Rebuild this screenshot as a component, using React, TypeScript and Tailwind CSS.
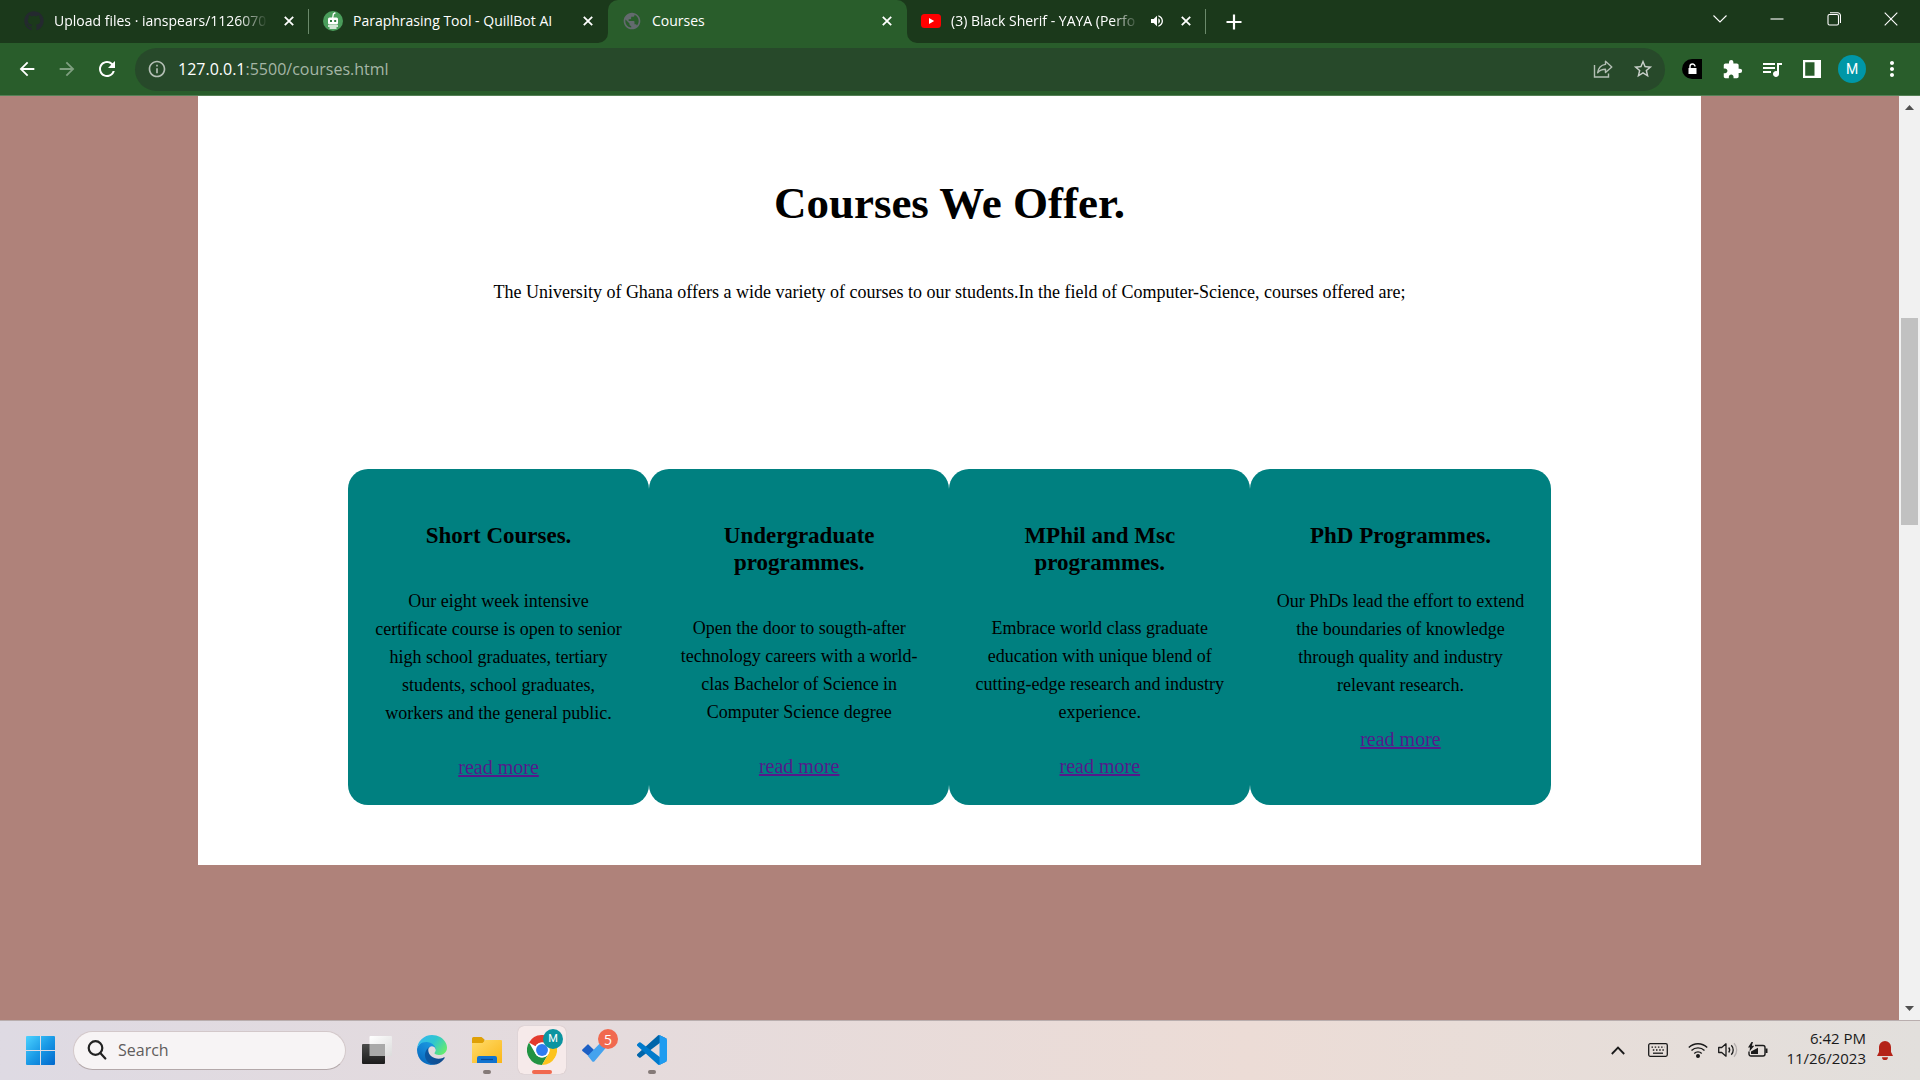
import type { ReactNode } from "react";
import {
  MdArrowBack,
  MdArrowForward,
  MdExtension,
  MdInfoOutline,
  MdMoreVert,
  MdPublic,
  MdQueueMusic,
  MdRefresh,
  MdStarBorder,
  MdVolumeUp,
} from "react-icons/md";
import { FaGithub } from "react-icons/fa";

/* ---------- Tab strip ---------- */

function QuillBotIcon() {
  return (
    <svg viewBox="0 0 20 20" className="size-5 shrink-0">
      <circle cx="10" cy="10" r="10" fill="#4a9d5b" />
      <path d="M9.6 7.5 10.4 3l2-1.4" stroke="#fff" strokeWidth="1.3" fill="none" />
      <rect x="5" y="6.5" width="10" height="7" rx="1.5" fill="#fff" />
      <rect x="7" y="9" width="2" height="2" fill="#2d7a40" />
      <rect x="11.2" y="9" width="2" height="2" fill="#2d7a40" />
      <path d="M5 15h10M6.500 17h7" stroke="#fff" strokeWidth="1.4" />
    </svg>
  );
}

function YouTubeIcon() {
  return (
    <svg viewBox="0 0 20 20" className="size-5 shrink-0">
      <rect y="3" width="20" height="14" rx="3.500" fill="#f00" />
      <path d="M8 7v6l5.200-3z" fill="#fff" />
    </svg>
  );
}

function CloseGlyph() {
  return (
    <svg viewBox="0 0 10 10" className="size-[10px]" stroke="currentColor" strokeWidth="1.800">
      <path d="M.8.8l8.400 8.400M9.200.8.8 9.200" />
    </svg>
  );
}

type TabProps = {
  icon: ReactNode;
  title: string;
  active?: boolean;
  faded?: boolean;
  divider?: boolean;
  audible?: boolean;
};

function Tab({ icon, title, active, faded, divider, audible }: TabProps) {
  return (
    <div
      className={
        active
          ? "relative flex h-full w-[299px] min-w-0 items-center gap-[10px] rounded-t-[10px] bg-[#295d2b] pr-[9px] pb-0.5 pl-[14px]"
          : "relative flex h-full w-[299px] min-w-0 items-center gap-[10px] pr-[9px] pb-0.5 pl-[14px]"
      }
    >
      {active && (
        <>
          <svg viewBox="0 0 10 10" className="absolute bottom-0 -left-[10px] size-[10px]" fill="#295d2b">
            <path d="M10 0v10H0A10 10 0 0 0 10 0z" />
          </svg>
          <svg viewBox="0 0 10 10" className="absolute -right-[10px] bottom-0 size-[10px]" fill="#295d2b">
            <path d="M0 0v10h10A10 10 0 0 1 0 0z" />
          </svg>
        </>
      )}
      {icon}
      <span
        className={
          faded
            ? "min-w-0 flex-1 overflow-hidden whitespace-nowrap [mask-image:linear-gradient(to_right,black_86%,transparent)]"
            : "min-w-0 flex-1 overflow-hidden whitespace-nowrap"
        }
      >
        {title}
      </span>
      {audible && <MdVolumeUp className="size-4 shrink-0" />}
      <button type="button" aria-label={`Close ${title}`} className="flex w-[22px] shrink-0 justify-center">
        <CloseGlyph />
      </button>
      {divider && <span className="absolute top-[9px] right-0 h-[25px] w-px bg-[#6b8a6b]" />}
    </div>
  );
}

function WindowButton({ label, children }: { label: string; children: ReactNode }) {
  return (
    <button type="button" aria-label={label} className="flex h-[37px] w-[57px] items-center justify-center">
      <svg viewBox="0 0 14 14" className="size-[14px]" fill="none" stroke="#fff" strokeWidth="1.100">
        {children}
      </svg>
    </button>
  );
}

function TabStrip() {
  return (
    <div className="flex h-[43px] bg-[#1b391b] text-white">
      <div className="flex h-full min-w-0 flex-1 pl-[10px] text-sm">
        <Tab icon={<FaGithub className="size-5 shrink-0 text-[#24292f]" />} title="Upload files · ianspears/1126070" faded divider />
        <Tab icon={<QuillBotIcon />} title="Paraphrasing Tool - QuillBot AI" />
        <Tab icon={<MdPublic className="size-5 shrink-0 text-[#636a6e]" />} title="Courses" active />
        <Tab icon={<YouTubeIcon />} title="(3) Black Sherif - YAYA (Perfo" faded divider audible />
        <button type="button" aria-label="New tab" className="ml-[10px] flex w-9 items-center justify-center">
          <svg viewBox="0 0 16 16" className="size-4" stroke="#fff" strokeWidth="2.200">
            <path d="M8 .5v15M.5 8h15" />
          </svg>
        </button>
      </div>
      <div className="flex pr-px">
        <WindowButton label="Search tabs">
          <path d="M.5 3.500 7 10l6.500-6.500" />
        </WindowButton>
        <WindowButton label="Minimize">
          <path d="M.5 7h13" />
        </WindowButton>
        <WindowButton label="Restore">
          <rect x="1" y="2.500" width="10.500" height="10.500" rx="1.500" />
          <path d="M3 .8h7.500a3 3 0 0 1 3 3V11" />
        </WindowButton>
        <WindowButton label="Close window">
          <path d="m.7.7 12.600 12.600M13.300.7.7 13.300" />
        </WindowButton>
      </div>
    </div>
  );
}

/* ---------- Toolbar ---------- */

function ToolButton({ label, children }: { label: string; children: ReactNode }) {
  return (
    <button type="button" aria-label={label} className="flex h-10 w-10 shrink-0 items-center justify-center">
      {children}
    </button>
  );
}

function Toolbar() {
  return (
    <div className="flex h-[53px] items-center border-b border-[#548055] bg-[#295d2b] pr-2 pl-[7px] text-white">
      <ToolButton label="Back">
        <MdArrowBack className="size-[22px]" />
      </ToolButton>
      <ToolButton label="Forward">
        <MdArrowForward className="size-[22px] text-[#7f9f80]" />
      </ToolButton>
      <ToolButton label="Reload">
        <MdRefresh className="size-6" />
      </ToolButton>
      <div className="ml-2 flex h-[43px] min-w-0 flex-1 items-center rounded-full bg-[#27492a] pr-[2px] pl-3">
        <MdInfoOutline className="size-5 shrink-0 text-[#b4bfb5]" />
        <div
          role="textbox"
          aria-label="Address and search bar"
          className="ml-[11px] min-w-0 flex-1 text-base text-[#a5b6a6]"
        >
          <span className="text-white">127.0.0.1</span>:5500/courses.html
        </div>
        <ToolButton label="Share this page">
          <svg viewBox="0 0 20 20" className="size-5" fill="none" stroke="#b4bfb5" strokeWidth="1.400">
            <path d="M1.500 6v12h14v-3.500" />
            <path d="M12.500 2.200 18.800 8l-6.300 5.600v-3.300c-3.700 0-5.900 1-7.900 3.500.6-4.400 3-7.700 7.900-8.400z" strokeLinejoin="round" />
          </svg>
        </ToolButton>
        <ToolButton label="Bookmark this page">
          <MdStarBorder className="size-[22px] text-[#c9d0ca]" />
        </ToolButton>
      </div>
      <div className="ml-[7px] flex">
        <ToolButton label="Lock extension">
          <svg viewBox="0 0 20 20" className="size-5">
            <path d="M10 0h10v20H10A10 10 0 0 1 10 0z" fill="#000" />
            <rect x="6.500" y="9" width="8" height="6" fill="#fff" />
            <path d="M8 9V7.500a2.500 2.500 0 0 1 5 0" fill="none" stroke="#fff" strokeWidth="1.400" />
          </svg>
        </ToolButton>
        <ToolButton label="Extensions">
          <MdExtension className="size-[21px]" />
        </ToolButton>
        <ToolButton label="Media controls">
          <MdQueueMusic className="size-6" />
        </ToolButton>
        <ToolButton label="Side panel">
          <svg viewBox="0 0 18 18" className="size-[18px]">
            <path d="M0 0h18v18H0zM2.200 2.200v13.600h9.300V2.200z" fill="#fff" fillRule="evenodd" />
          </svg>
        </ToolButton>
        <ToolButton label="Profile">
          <span className="flex size-7 items-center justify-center rounded-full bg-[#0097a7] font-[Roboto] text-sm">M</span>
        </ToolButton>
        <ToolButton label="Menu">
          <MdMoreVert className="size-6" />
        </ToolButton>
      </div>
    </div>
  );
}

/* ---------- Page ---------- */

const courses = [
  {
    title: "Short Courses.",
    text: "Our eight week intensive certificate course is open to senior high school graduates, tertiary students, school graduates, workers and the general public.",
  },
  {
    title: "Undergraduate programmes.",
    text: "Open the door to sougth-after technology careers with a world-clas Bachelor of Science in Computer Science degree",
  },
  {
    title: "MPhil and Msc programmes.",
    text: "Embrace world class graduate education with unique blend of cutting-edge research and industry experience.",
  },
  {
    title: "PhD Programmes.",
    text: "Our PhDs lead the effort to extend the boundaries of knowledge through quality and industry relevant research.",
  },
];

function CoursesPage() {
  return (
    <main className="min-w-0 flex-1 bg-[#af827a] px-[10px] font-['Liberation_Serif',serif] text-black">
      <section className="mx-auto w-4/5 bg-white pt-20 pb-[60px] text-center">
        <h1 className="text-[45px] leading-[54px] font-bold">Courses We Offer.</h1>
        <p className="mt-12 text-[18px] leading-7">
          The University of Ghana offers a wide variety of courses to our students.In the field of Computer-Science,
          courses offered are;
        </p>
        <div className="mx-auto mt-[163px] grid w-4/5 grid-cols-4">
          {courses.map((course) => (
            <article key={course.title} className="rounded-[20px] bg-[teal] px-6 pt-[53px] pb-6">
              <h3 className="text-[23px] leading-[27px] font-bold">{course.title}</h3>
              <p className="mt-[38px] text-[18px] leading-7">{course.text}</p>
              <a href="#more" className="mt-[26px] inline-block text-xl text-[#551a8b] underline">
                read more
              </a>
            </article>
          ))}
        </div>
      </section>
    </main>
  );
}

function Scrollbar() {
  return (
    <div className="flex w-[21px] shrink-0 flex-col items-center bg-[#f1f1f1]">
      <svg viewBox="0 0 21 22" className="h-[22px] w-[21px]" fill="#505050">
        <path d="m6 14 4.500-5 4.500 5z" />
      </svg>
      <div className="flex w-full flex-1 flex-col items-center pt-[200px]">
        <div className="h-[207px] w-[17px] bg-[#c1c1c1]" />
      </div>
      <svg viewBox="0 0 21 22" className="h-[22px] w-[21px]" fill="#505050">
        <path d="m6 8 4.500 5L15 8z" />
      </svg>
    </div>
  );
}

/* ---------- Taskbar ---------- */

function WindowsLogo() {
  return (
    <svg viewBox="0 0 29 29" className="size-[29px]">
      <defs>
        <linearGradient id="win" x1="0" y1="0" x2="1" y2="1">
          <stop offset="0" stopColor="#4cd2ff" />
          <stop offset=".5" stopColor="#1a9ae6" />
          <stop offset="1" stopColor="#0067cc" />
        </linearGradient>
      </defs>
      <path
        d="M1 0h13v14H0V1a1 1 0 0 1 1-1zM15 0h13a1 1 0 0 1 1 1v13H15zM0 15h14v14H1a1 1 0 0 1-1-1zM15 15h14v13a1 1 0 0 1-1 1H15z"
        fill="url(#win)"
      />
    </svg>
  );
}

function TaskViewIcon() {
  return (
    <svg viewBox="0 0 30 30" className="size-[30px]">
      <defs>
        <linearGradient id="tvDark" x1="0" y1="0" x2="0" y2="1">
          <stop offset="0" stopColor="#4a4a4a" />
          <stop offset="1" stopColor="#1c1c1c" />
        </linearGradient>
        <linearGradient id="tvLight" x1="0" y1="0" x2="1" y2="1">
          <stop offset="0" stopColor="#fff" />
          <stop offset="1" stopColor="#dcdcdc" />
        </linearGradient>
      </defs>
      <rect x="7.500" y="1" width="22.500" height="20" rx="1" fill="url(#tvLight)" />
      <rect y="9" width="23" height="20" rx="1" fill="url(#tvDark)" />
      <rect x="7.500" y="9" width="15.500" height="12" fill="#a9a9a9" />
    </svg>
  );
}

function EdgeIcon() {
  return (
    <svg viewBox="0 0 256 256" className="size-[30px]">
      <defs>
        <linearGradient id="edgeA" x1="0" y1="0" x2="1" y2="0">
          <stop offset="0" stopColor="#0c59a4" />
          <stop offset="1" stopColor="#114a8b" />
        </linearGradient>
        <linearGradient id="edgeB" x1=".8" y1="0" x2=".2" y2="1">
          <stop offset="0" stopColor="#1b9de2" />
          <stop offset=".5" stopColor="#1383d3" />
          <stop offset="1" stopColor="#0563b8" />
        </linearGradient>
        <linearGradient id="edgeC" x1="0" y1=".2" x2="1" y2=".7">
          <stop offset="0" stopColor="#35b7f1" />
          <stop offset=".5" stopColor="#2fc6cf" />
          <stop offset="1" stopColor="#66eb6e" />
        </linearGradient>
      </defs>
      <path
        fill="url(#edgeA)"
        d="M231 190.500c-3.400 1.800-6.900 3.400-10.500 4.700a101.900 101.900 0 0 1-35.900 6.400c-47.300 0-88.500-32.500-88.500-74.300 0-11.400 6.500-21.900 16.400-27.300-42.800 1.800-53.800 46.400-53.800 72.500 0 73.900 68.100 81.400 82.800 81.400 7.900 0 19.800-2.300 27-4.600l1.300-.4a128.300 128.300 0 0 0 66.600-52.800 4 4 0 0 0-5.400-5.600z"
      />
      <path
        fill="url(#edgeB)"
        d="M105.700 241.400a79.200 79.200 0 0 1-22.700-21.300 80.700 80.700 0 0 1 29.500-120c3.200-1.500 8.500-4.100 15.600-4a32.400 32.400 0 0 1 25.700 13 31.900 31.900 0 0 1 6.300 18.700c0-.2 24.500-79.600-80-79.600-43.900 0-80 41.700-80 78.200a130.200 130.200 0 0 0 12.100 56 128 128 0 0 0 156.400 67 75.500 75.500 0 0 1-62.900-8z"
      />
      <path
        fill="url(#edgeC)"
        d="M152.300 148.900c-.9 1-3.400 2.500-3.400 5.600 0 2.600 1.700 5.200 4.800 7.300 14.300 10 41.400 8.600 41.500 8.600 10.700 0 21.100-2.900 30.300-8.300A61.400 61.400 0 0 0 256 109.200c.3-22.400-8-37.300-11.300-43.900C223.500 23.900 177.700 0 128 0A128 128 0 0 0 0 126.200c.5-36.500 36.800-66 80-66 3.500 0 23.500.3 42 10 16.300 8.600 24.900 18.900 30.800 29.200 6.200 10.700 7.300 24.100 7.300 29.500s-2.700 13.300-7.800 20z"
      />
    </svg>
  );
}

function FolderIcon() {
  return (
    <svg viewBox="0 0 30 30" className="size-[30px]">
      <defs>
        <linearGradient id="folder" x1="0" y1="0" x2="1" y2="1">
          <stop offset="0" stopColor="#ffdc6b" />
          <stop offset="1" stopColor="#fbb617" />
        </linearGradient>
      </defs>
      <path d="M0 3.500A1.500 1.500 0 0 1 1.500 2h8l3 2.500V9H0z" fill="#dfa006" />
      <path d="M0 8h10.500l3-3H29a1 1 0 0 1 1 1v22H0z" fill="url(#folder)" />
      <path d="M5 28v-5a2 2 0 0 1 2-2h16a2 2 0 0 1 2 2v5z" fill="#1173cf" />
      <path d="M9 24.500h12" stroke="#0a4a94" strokeWidth="1.200" />
    </svg>
  );
}

function ChromeIcon() {
  return (
    <svg viewBox="0 0 48 48" className="size-[30px]">
      <circle cx="24" cy="24" r="24" fill="#fff" />
      <path d="M3.200 12A24 24 0 0 1 44.800 12H24a12 12 0 0 0-10.400 6z" fill="#e33b2e" />
      <path d="M3.200 12A24 24 0 0 0 24 48l10.400-18a12 12 0 0 1-20.800 0z" fill="#229342" />
      <path d="M44.800 12A24 24 0 0 1 24 48l10.400-18A12 12 0 0 0 34.400 18 12 12 0 0 0 24 12z" fill="#fcc31e" />
      <circle cx="24" cy="24" r="12" fill="#fff" />
      <circle cx="24" cy="24" r="9.500" fill="#2f7cf0" />
    </svg>
  );
}

function TodoIcon() {
  return (
    <svg viewBox="0 0 30 30" className="size-[30px]">
      <path d="M.4 14.600 5.300 9.700a1 1 0 0 1 1.400 0L15 18l-4 6.500L.4 16a1 1 0 0 1 0-1.400z" fill="#1c5fc4" />
      <path d="m5.800 20.800 15.700-16a1.500 1.500 0 0 1 2.100 0l2.800 2.900a1.500 1.500 0 0 1 0 2L12.300 26.400a1.500 1.500 0 0 1-2 0z" fill="#45a3ee" />
    </svg>
  );
}

function VsCodeIcon() {
  return (
    <svg viewBox="0 0 100 100" className="size-[30px]">
      <path
        d="M96.500 10.800 75.900.9a6.200 6.200 0 0 0-7.100 1.200L1.300 63.600a4.200 4.200 0 0 0 0 6.200l5.500 5a4.200 4.200 0 0 0 5.300.2L93.400 13.400a4.100 4.100 0 0 1 6.600 3.300v-.3a6.200 6.200 0 0 0-3.500-5.600z"
        fill="#0065a9"
      />
      <path
        d="m96.500 89.200-20.600 9.900a6.200 6.200 0 0 1-7.100-1.200L1.300 36.400a4.200 4.200 0 0 1 0-6.200l5.500-5a4.200 4.200 0 0 1 5.300-.2l81.300 61.600a4.100 4.100 0 0 0 6.600-3.300v.3a6.200 6.200 0 0 1-3.500 5.600z"
        fill="#007acc"
      />
      <path
        d="M75.900 99.100a6.200 6.200 0 0 1-7.100-1.200c2.300 2.300 6.200.7 6.200-2.600V4.700c0-3.300-3.900-4.900-6.200-2.600A6.200 6.200 0 0 1 75.900.9l20.600 9.900a6.200 6.200 0 0 1 3.500 5.600v67.200a6.200 6.200 0 0 1-3.500 5.600z"
        fill="#1f9cf0"
      />
    </svg>
  );
}

type AppButtonProps = { label: string; children: ReactNode; running?: boolean; active?: boolean; badge?: ReactNode };

function AppButton({ label, children, running, active, badge }: AppButtonProps) {
  return (
    <button
      type="button"
      aria-label={label}
      className={
        active
          ? "relative flex size-12 shrink-0 items-center justify-center rounded-md bg-[#f6eaea] shadow-[0_0_1px_#b9a5a5]"
          : "relative flex size-12 shrink-0 items-center justify-center rounded-md"
      }
    >
      {children}
      {badge}
      {running && <span className="absolute bottom-0 left-5 h-1 w-2 rounded-full bg-[#857a78]" />}
      {active && <span className="absolute bottom-0 left-[14px] h-1 w-5 rounded-full bg-[#f1694f]" />}
    </button>
  );
}

function Tray() {
  return (
    <div className="flex items-center text-[#1a1a1a]">
      <button type="button" aria-label="Show hidden icons" className="mr-[23px]">
        <svg viewBox="0 0 14 9" className="h-[9px] w-[14px]" fill="none" stroke="currentColor" strokeWidth="1.800">
          <path d="M.8 8 7 1.600 13.200 8" />
        </svg>
      </button>
      <button type="button" aria-label="Touch keyboard" className="mr-5">
        <svg viewBox="0 0 20 14" className="h-[14px] w-5" fill="none" stroke="currentColor" strokeWidth="1.300">
          <rect x=".7" y=".7" width="18.600" height="12.600" rx="1.500" />
          <path d="M3.500 4.200h13M4.800 7h11" strokeDasharray="1.500 1.700" />
          <path d="M5 10.200h10" />
        </svg>
      </button>
      <button type="button" aria-label="Network, volume and battery" className="flex items-center gap-[10px]">
        <svg viewBox="0 0 20 16" className="h-4 w-5" fill="none" stroke="currentColor" strokeWidth="1.400">
          <path d="M.8 5.600a13 13 0 0 1 18.400 0M3.500 8.600a9.200 9.200 0 0 1 13 0M6.300 11.400a5.300 5.300 0 0 1 7.400 0" />
          <circle cx="10" cy="14" r="1.300" fill="currentColor" />
        </svg>
        <svg viewBox="0 0 20 16" className="h-4 w-5" fill="none" stroke="currentColor" strokeWidth="1.300">
          <path d="M.7 5.500h3L8 1.800v12.400l-4.300-3.700h-3z" strokeLinejoin="round" />
          <path d="M10.700 5.500a4 4 0 0 1 0 5M13.300 3.200a7 7 0 0 1 0 9.600" />
          <path d="M16 1.200a10 10 0 0 1 0 13.600" stroke="#b5afae" />
        </svg>
        <svg viewBox="0 0 20 16" className="h-4 w-5" fill="none" stroke="currentColor" strokeWidth="1.400">
          <path d="M7 3.500h8a2 2 0 0 1 2 2V12a2 2 0 0 1-2 2H3a2 2 0 0 1-2-2V9.500" />
          <path d="M3 12V9.500L10 5.800V12z" fill="currentColor" stroke="none" />
          <path d="M17.500 6.500h2v4.500h-2z" fill="currentColor" stroke="none" />
          <path d="M3.500 0 0 5.500h2L1.500 9.500 6.300 3.800H3.800L5 0z" fill="currentColor" stroke="none" />
        </svg>
      </button>
      <button type="button" className="ml-[18px] pb-1 text-right text-[15px] leading-5">
        <span className="block">6:42 PM</span>
        <span className="block">11/26/2023</span>
      </button>
      <button type="button" aria-label="Notifications" className="ml-[11px]">
        <svg viewBox="0 0 16 20" className="h-5 w-4" fill="#b42318">
          <path d="M8 1a6 6 0 0 1 6 6v5l2 4H0l2-4V7a6 6 0 0 1 6-6zM5 17.200h6a3 3 0 0 1-6 0z" />
        </svg>
      </button>
    </div>
  );
}

function Taskbar() {
  return (
    <footer className="flex h-[60px] items-center justify-between border-t border-[#b9aeae] bg-linear-to-r from-[#dedae3] via-[#ecdcd6] via-65% to-[#e2dfdc] pr-[27px] pb-px pl-[26px]">
      <div className="flex items-center">
        <button type="button" aria-label="Start">
          <WindowsLogo />
        </button>
        <label className="mr-[7px] ml-[18px] flex h-[39px] w-[273px] items-center rounded-full border border-[#d3c8ca] border-b-[#b3a8aa] bg-[#f7f4f5] pl-[13px]">
          <svg viewBox="0 0 20 20" className="size-5 shrink-0" fill="none" stroke="#222" strokeWidth="2.200">
            <circle cx="8.500" cy="8" r="6.800" />
            <path d="m13.300 13 5 5.500" strokeLinecap="round" />
          </svg>
          <input
            type="text"
            aria-label="Search"
            placeholder="Search"
            className="ml-[11px] min-w-0 flex-1 bg-transparent text-base outline-none placeholder:text-[#5f5c5c]"
          />
        </label>
        <div className="flex gap-[7px]">
          <AppButton label="Task view">
            <TaskViewIcon />
          </AppButton>
          <AppButton label="Microsoft Edge">
            <EdgeIcon />
          </AppButton>
          <AppButton label="File Explorer" running>
            <FolderIcon />
          </AppButton>
          <AppButton
            label="Google Chrome"
            active
            badge={
              <span className="absolute top-[3px] right-[3px] flex size-5 items-center justify-center rounded-full bg-[#0b94a0] font-[Roboto] text-[11px] text-white">
                M
              </span>
            }
          >
            <ChromeIcon />
          </AppButton>
          <AppButton
            label="Microsoft To Do"
            badge={
              <span className="absolute top-[3px] right-[3px] flex size-5 items-center justify-center rounded-full bg-[#f1694f] text-[14px] text-white">
                5
              </span>
            }
          >
            <TodoIcon />
          </AppButton>
          <AppButton label="Visual Studio Code" running>
            <VsCodeIcon />
          </AppButton>
        </div>
      </div>
      <Tray />
    </footer>
  );
}

export default function App() {
  return (
    <div className="flex min-h-screen flex-col font-['Open_Sans',sans-serif]">
      <header>
        <TabStrip />
        <Toolbar />
      </header>
      <div className="flex flex-1">
        <CoursesPage />
        <Scrollbar />
      </div>
      <Taskbar />
    </div>
  );
}
